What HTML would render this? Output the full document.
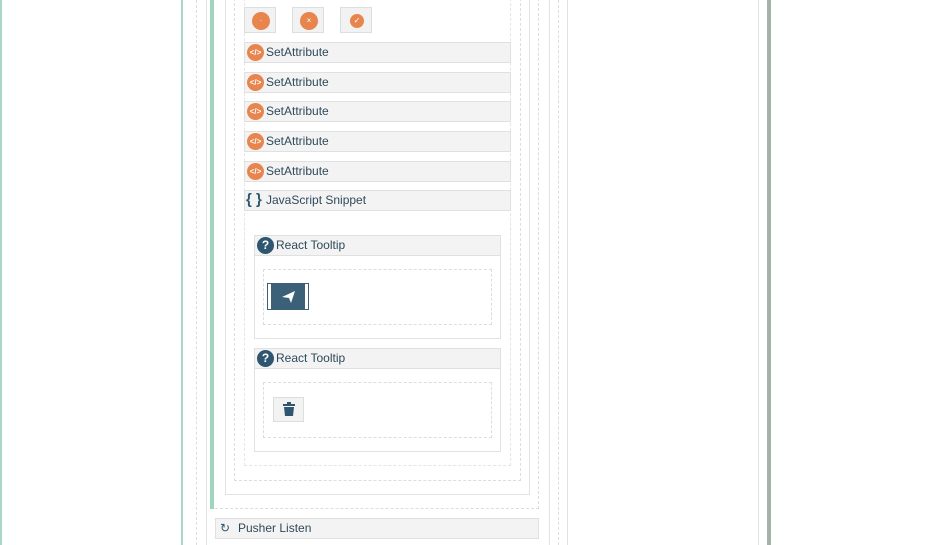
<!DOCTYPE html>
<html><head><meta charset="utf-8"><style>
body{margin:0;width:940px;height:545px;background:#fff;position:relative;overflow:hidden;font-family:"Liberation Sans",sans-serif;}
.a{position:absolute;box-sizing:border-box;}
.d{border:1px dashed #ddd;}
.s{border:1px solid #e2e2e2;}
.row{position:absolute;box-sizing:border-box;background:#f3f3f3;border:1px solid #e0e0e0;height:21px;font-size:12px;color:#2e4a5a;line-height:19px;padding-left:21px;}
.ic{position:absolute;left:2px;top:1px;width:17px;height:17px;border-radius:50%;background:#e8854f;color:#fff;font-size:8px;line-height:17px;text-align:center;font-weight:bold;}
.btn{position:absolute;box-sizing:border-box;width:32px;height:26px;background:#f2f2f2;border:1px solid #d8e0dc;}
.btn i{position:absolute;left:7px;top:4px;width:18px;height:18px;border-radius:50%;background:#e8854f;color:#fff;font-size:8px;line-height:18px;text-align:center;font-style:normal;}
.q{position:absolute;left:2px;top:1px;width:17px;height:17px;border-radius:50%;background:#2f5670;color:#fff;font-size:12px;font-weight:bold;line-height:17px;text-align:center;}
</style></head><body>
<div class="a" style="left:0;top:0;width:2px;height:545px;background:#a8d8c4"></div>
<div class="a" style="left:181px;top:0;width:2px;height:545px;background:#a8d8c4"></div>
<div class="a" style="left:196px;top:0;width:1px;height:545px;border-left:1px dashed #ddd"></div>
<div class="a" style="left:206px;top:0;width:1px;height:545px;background:#e2e2e2"></div>
<div class="a" style="left:758px;top:0;width:1px;height:545px;background:#e4e4e4"></div>
<div class="a" style="left:767px;top:0;width:4px;height:545px;background:#a3b3aa"></div>
<div class="a" style="left:567px;top:0;width:1px;height:545px;background:#e2e2e2"></div>
<div class="a" style="left:558px;top:0;width:1px;height:545px;border-left:1px dashed #ddd"></div>
<div class="a" style="left:549px;top:0;width:1px;height:545px;background:#e2e2e2"></div>
<div class="a d" style="left:210px;top:-2px;width:329px;height:511px;border-top:none"></div>
<div class="a" style="left:210px;top:0;width:4px;height:509px;background:#9fd4bd"></div>
<div class="a s" style="left:225px;top:-2px;width:305px;height:497px"></div>
<div class="a d" style="left:234px;top:-2px;width:287px;height:483px"></div>
<div class="a d" style="left:244px;top:-2px;width:267px;height:468px;border-color:#e6e6e6"></div>

<div class="btn" style="left:244px;top:7px"><i>·</i></div>
<div class="btn" style="left:292px;top:7px"><i>×</i></div>
<div class="btn" style="left:340px;top:7px"><i style="width:14px;height:14px;left:9px;top:6px;line-height:14px">✓</i></div>

<div class="row" style="left:244px;top:42px;width:267px"><span class="ic">&lt;/&gt;</span>SetAttribute</div>
<div class="row" style="left:244px;top:72px;width:267px"><span class="ic">&lt;/&gt;</span>SetAttribute</div>
<div class="row" style="left:244px;top:101px;width:267px"><span class="ic">&lt;/&gt;</span>SetAttribute</div>
<div class="row" style="left:244px;top:131px;width:267px"><span class="ic">&lt;/&gt;</span>SetAttribute</div>
<div class="row" style="left:244px;top:161px;width:267px"><span class="ic">&lt;/&gt;</span>SetAttribute</div>
<div class="row" style="left:244px;top:190px;width:267px"><span style="position:absolute;left:1px;top:-1px;color:#2f5670;font-weight:bold;font-size:15px">{ }</span>JavaScript Snippet</div>

<div class="a d" style="left:244px;top:222px;width:267px;height:244px;border-top:none;border-color:#e6e6e6"></div>
<div class="a s" style="left:254px;top:235px;width:247px;height:104px"></div>
<div class="row" style="left:254px;top:235px;width:247px"><span class="q">?</span>React Tooltip</div>
<div class="a d" style="left:263px;top:269px;width:229px;height:56px"></div>
<div class="a" style="left:267px;top:283px;width:42px;height:27px;background:#3b6078;border:1px solid #3b6078;box-shadow:inset 3px 0 0 #fff,inset -3px 0 0 #fff"><svg width="40" height="25" style="position:absolute;left:0;top:0"><path d="M14 13 L27 7 L23 19 L21 14 Z" fill="#fff"/></svg></div>

<div class="a s" style="left:254px;top:348px;width:247px;height:104px"></div>
<div class="row" style="left:254px;top:348px;width:247px"><span class="q">?</span>React Tooltip</div>
<div class="a d" style="left:263px;top:382px;width:229px;height:56px"></div>
<div class="btn" style="left:273px;top:397px;width:31px;height:25px"><svg width="30" height="24" style="position:absolute;left:0;top:0"><rect x="9" y="6" width="12" height="2" fill="#2f5670"/><rect x="13" y="4" width="4" height="2" fill="#2f5670"/><path d="M10 9 H20 L19 18 H11 Z" fill="#2f5670"/></svg></div>

<div class="row" style="left:215px;top:518px;width:324px;padding-left:22px"><span style="position:absolute;left:4px;top:0;color:#2f5670;font-size:12px">↻</span>Pusher Listen</div>
</body></html>
